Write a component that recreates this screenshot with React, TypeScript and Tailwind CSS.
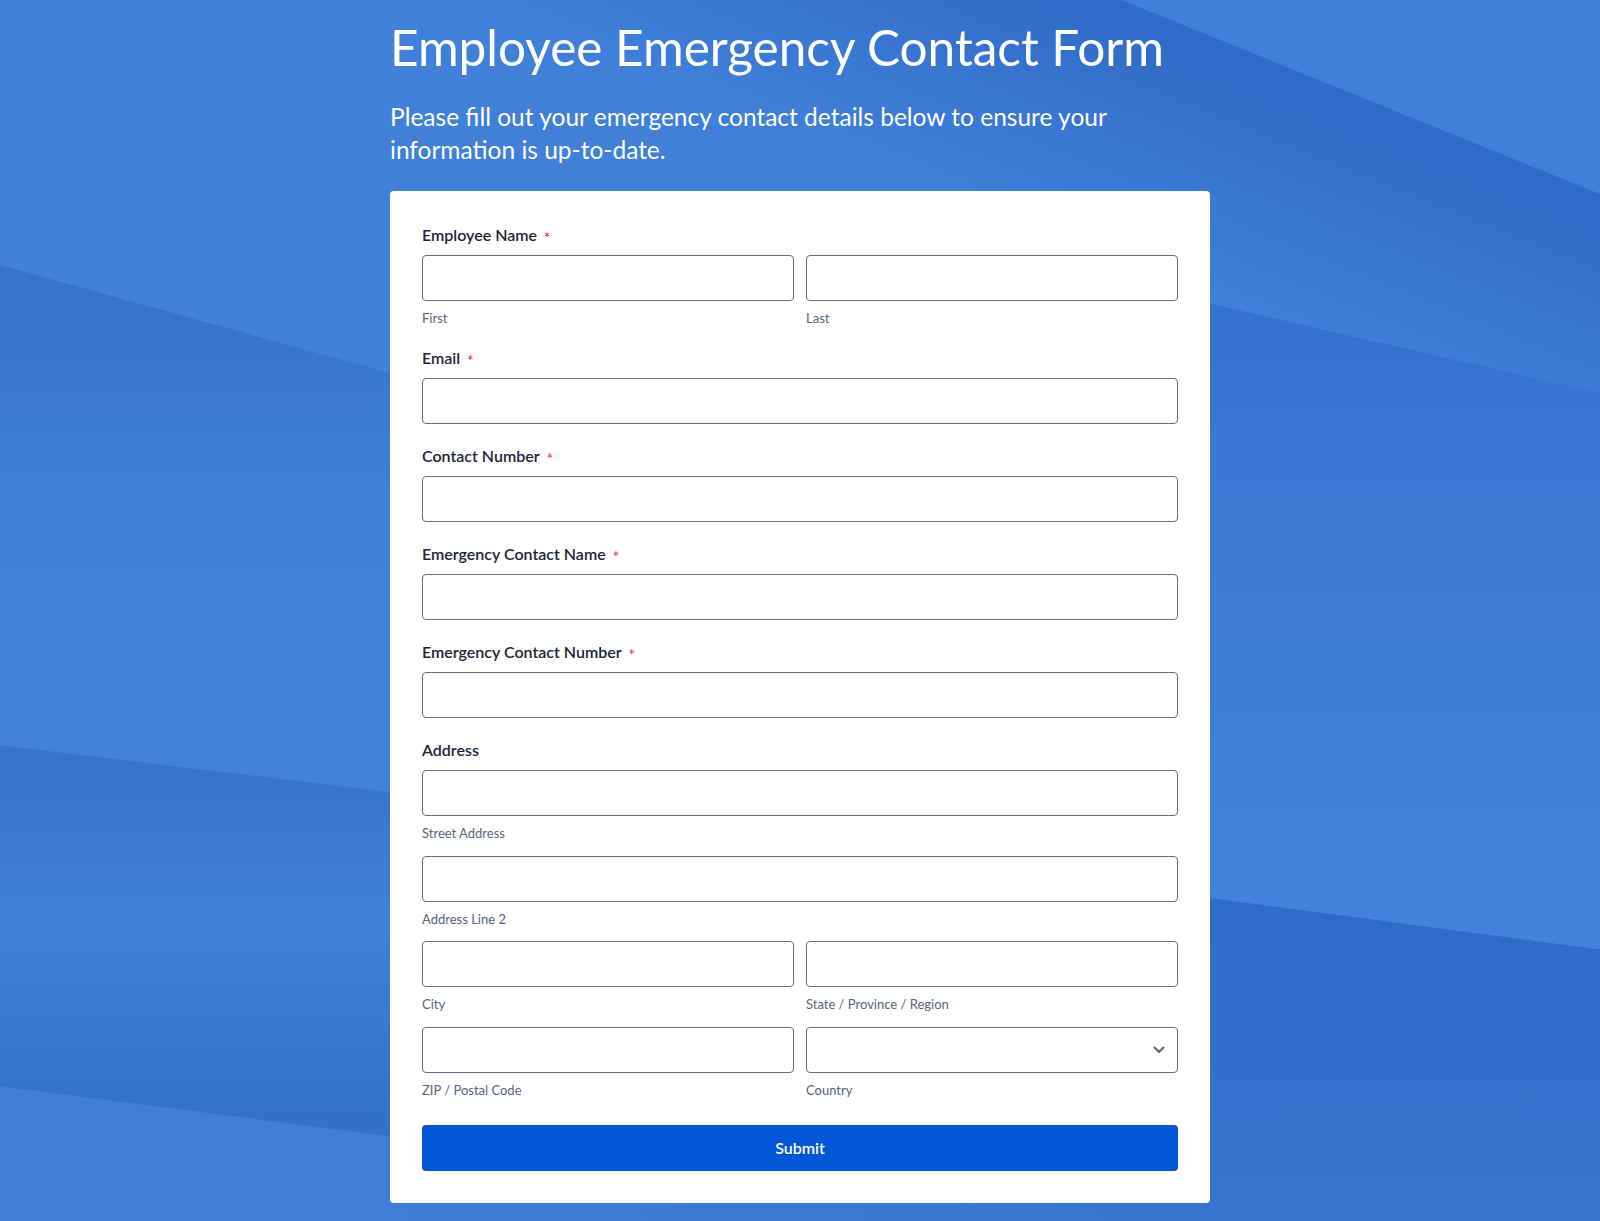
import React from "react";

const Background = () => (
  <svg
    className="absolute inset-0 w-full h-full"
    viewBox="0 0 1600 1221"
    preserveAspectRatio="none"
    aria-hidden="true"
  >
    <defs>
      <linearGradient id="gD" gradientUnits="userSpaceOnUse" x1="1400" y1="113" x2="1306" y2="345">
        <stop offset="0" stopColor="#2e6ac7" />
        <stop offset="1" stopColor="#4080d9" />
      </linearGradient>
      <linearGradient id="gE" gradientUnits="userSpaceOnUse" x1="1400" y1="347" x2="1400" y2="923">
        <stop offset="0" stopColor="#3571ce" />
        <stop offset="0.15" stopColor="#3a76d3" />
        <stop offset="0.85" stopColor="#4181da" />
        <stop offset="1" stopColor="#4282db" />
      </linearGradient>
      <linearGradient id="gF" gradientUnits="userSpaceOnUse" x1="1400" y1="923" x2="1400" y2="1221">
        <stop offset="0" stopColor="#2f6cc9" />
        <stop offset="1" stopColor="#3774d0" />
      </linearGradient>
      <linearGradient id="gA" gradientUnits="userSpaceOnUse" x1="200" y1="320" x2="200" y2="769">
        <stop offset="0" stopColor="#3672ce" />
        <stop offset="0.4" stopColor="#4080d9" />
        <stop offset="1" stopColor="#4281da" />
      </linearGradient>
      <linearGradient id="gB" gradientUnits="userSpaceOnUse" x1="200" y1="769" x2="200" y2="1112">
        <stop offset="0" stopColor="#3672ce" />
        <stop offset="0.45" stopColor="#4180d9" />
        <stop offset="1" stopColor="#3270cb" />
      </linearGradient>
      <linearGradient id="gC" gradientUnits="userSpaceOnUse" x1="390" y1="1210" x2="1210" y2="1210">
        <stop offset="0" stopColor="#3f7dd8" />
        <stop offset="1" stopColor="#3774d0" />
      </linearGradient>
    </defs>
    <rect width="1600" height="1221" fill="#4080d9" />
    <polygon points="0,-455 1600,194 1600,1221 0,1221" fill="url(#gD)" />
    <polygon points="800,209 1600,393 1600,949 800,844" fill="url(#gE)" />
    <polygon points="800,844 1600,949 1600,1221 1210,1221 1210,1195 800,1195" fill="url(#gF)" />
    <polygon points="0,265 900,514 900,853 0,745" fill="url(#gA)" />
    <polygon points="0,745 900,853 900,1201 0,1086" fill="url(#gB)" />
    <polygon points="0,1086 390,1136 390,1221 0,1221" fill="#3f7dd8" />
    <rect x="390" y="1195" width="820" height="26" fill="url(#gC)" />
  </svg>
);

const Label = ({ text, required }: { text: string; required?: boolean }) => (
  <label className="flex items-center text-[16px] leading-6 font-semibold text-[#1b2438] mb-2">
    {text}
    {required && (
      <span className="ml-[7px] translate-y-[2px] text-[15px] leading-none text-[#f23a3c]">*</span>
    )}
  </label>
);

const SubLabel = ({ text }: { text: string }) => (
  <span className="block mt-[10px] text-[13px] leading-[15px] text-[#57647e]">{text}</span>
);

const TextInput = () => (
  <input
    type="text"
    className="block w-full h-[46px] rounded border border-[#636e84] bg-white px-3 text-[15px] text-[#1b2438] outline-none"
  />
);

const CountrySelect = () => (
  <div className="relative">
    <select className="block w-full h-[46px] appearance-none rounded border border-[#636e84] bg-white px-3 text-[15px] text-[#1b2438] outline-none">
      <option value=""></option>
      <option>United States</option>
      <option>Canada</option>
      <option>United Kingdom</option>
    </select>
    <svg
      className="pointer-events-none absolute right-[13px] top-1/2 -translate-y-1/2"
      width="12"
      height="8"
      viewBox="0 0 12 8"
      fill="none"
    >
      <path d="M1.5 1.5L6 6l4.5-4.5" stroke="#5b667c" strokeWidth="2" strokeLinecap="round" strokeLinejoin="round" />
    </svg>
  </div>
);

export default function App() {
  return (
    <div className="relative min-h-screen overflow-hidden bg-[#4080d9] font-['Lato','Noto_Sans',sans-serif]">
      <Background />
      <div className="relative mx-auto w-[820px] pt-[17px] pb-[19px]">
        <h1 className="text-[49.5px] leading-[60px] font-normal text-white">
          Employee Emergency Contact Form
        </h1>
        <p className="mt-[23px] w-[760px] text-[24.5px] leading-[33px] text-white">
          Please fill out your emergency contact details below to ensure your information is up-to-date.
        </p>

        <form className="mt-[25px] rounded bg-white px-8 pt-8 pb-8" onSubmit={(e) => e.preventDefault()}>
          <div className="flex flex-col gap-5">
            <div>
              <Label text="Employee Name" required />
              <div className="grid grid-cols-2 gap-3">
                <div>
                  <TextInput />
                  <SubLabel text="First" />
                </div>
                <div>
                  <TextInput />
                  <SubLabel text="Last" />
                </div>
              </div>
            </div>

            <div>
              <Label text="Email" required />
              <TextInput />
            </div>

            <div>
              <Label text="Contact Number" required />
              <TextInput />
            </div>

            <div>
              <Label text="Emergency Contact Name" required />
              <TextInput />
            </div>

            <div>
              <Label text="Emergency Contact Number" required />
              <TextInput />
            </div>

            <div>
              <Label text="Address" />
              <div className="flex flex-col gap-[14.5px]">
                <div>
                  <TextInput />
                  <SubLabel text="Street Address" />
                </div>
                <div>
                  <TextInput />
                  <SubLabel text="Address Line 2" />
                </div>
                <div className="grid grid-cols-2 gap-3">
                  <div>
                    <TextInput />
                    <SubLabel text="City" />
                  </div>
                  <div>
                    <TextInput />
                    <SubLabel text="State / Province / Region" />
                  </div>
                </div>
                <div className="grid grid-cols-2 gap-3">
                  <div>
                    <TextInput />
                    <SubLabel text="ZIP / Postal Code" />
                  </div>
                  <div>
                    <CountrySelect />
                    <SubLabel text="Country" />
                  </div>
                </div>
              </div>
            </div>
          </div>

          <button
            type="submit"
            className="mt-[27px] block w-full h-[46px] rounded bg-[#0156d6] text-[16px] font-semibold text-white"
          >
            Submit
          </button>
        </form>
      </div>
    </div>
  );
}
